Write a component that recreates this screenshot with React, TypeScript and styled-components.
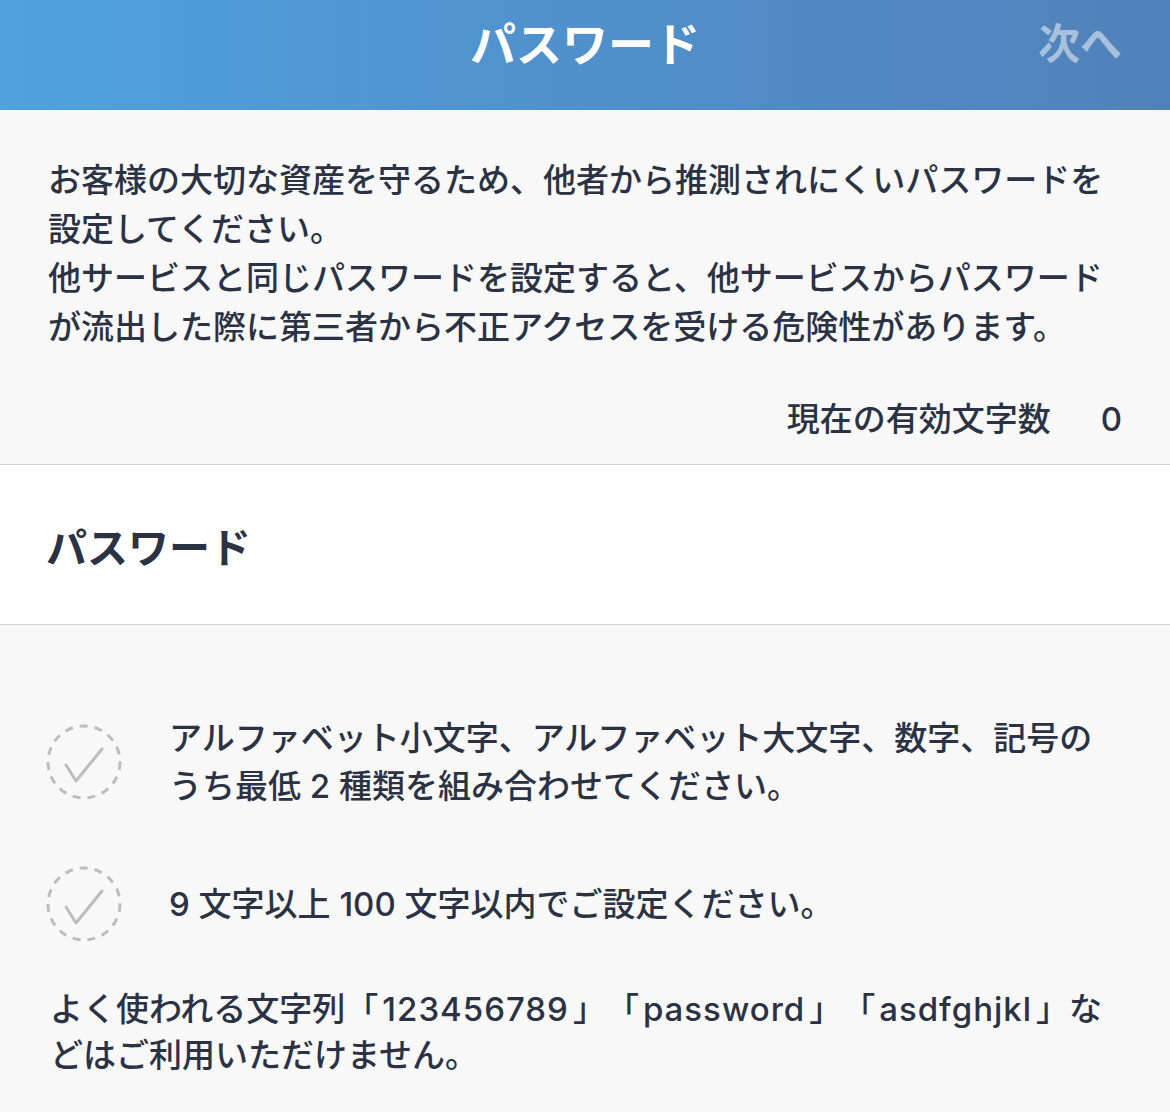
import React from 'react';
import styled, { createGlobalStyle } from 'styled-components';

const GlobalStyle = createGlobalStyle`
  html, body {
    margin: 0;
    padding: 0;
    background: #f8f8f8;
  }
  body {
    font-family: Inter, "Noto Sans CJK JP", "Noto Sans", sans-serif;
    color: #2b3243;
    text-spacing-trim: space-all;
  }
`;

const rules = [
  {
    id: 'kinds',
    text: 'アルファベット小文字、アルファベット大文字、数字、記号のうち最低 2 種類を組み合わせてください。',
  },
  { id: 'length', text: '9 文字以上 100 文字以内でご設定ください。' },
];

const weakWords = ['123456789', 'password', 'asdfghjkl'];

function CheckCircle() {
  return (
    <svg width="76" height="76" viewBox="0 0 76 76">
      <circle
        cx="38"
        cy="38"
        r="36"
        fill="none"
        stroke="#bdbdbd"
        strokeWidth="3"
        strokeDasharray="8 7"
      />
      <polyline
        points="20,41 30,57 56,25"
        fill="none"
        stroke="#bdbdbd"
        strokeWidth="3"
        strokeLinecap="round"
        strokeLinejoin="round"
      />
    </svg>
  );
}

export default function App() {
  return (
    <>
      <GlobalStyle />
      <Page>
        <Header>
          <HeaderSide />
          <HeaderTitle>パスワード</HeaderTitle>
          <HeaderSide>
            <NextButton>次へ</NextButton>
          </HeaderSide>
        </Header>

        <Intro>
          <IntroText>
            お客様の大切な資産を守るため、他者から推測されにくいパスワードを設定してください。
            <br />
            他サービスと同じパスワードを設定すると、他サービスからパスワードが流出した際に第三者から不正アクセスを受ける危険性があります。
          </IntroText>
          <Counter>
            <span>現在の有効文字数</span>
            <span>0</span>
          </Counter>
        </Intro>

        <FieldSection>
          <FieldTitle>パスワード</FieldTitle>
        </FieldSection>

        <RulesSection>
          <RuleList>
            {rules.map((r) => (
              <RuleRow key={r.id}>
                <CheckCircle />
                <RuleText>{r.text}</RuleText>
              </RuleRow>
            ))}
          </RuleList>
          <Note>
            よく使われる文字列
            {weakWords.map((w) => (
              <React.Fragment key={w}>
                「<Latin>{w}</Latin>」
              </React.Fragment>
            ))}
            な
            <br />
            どはご利用いただけません。
          </Note>
        </RulesSection>
      </Page>
    </>
  );
}

const Page = styled.div`
  width: 1170px;
  min-height: 1112px;
  background: #f8f8f8;
`;

const Header = styled.header`
  height: 110px;
  box-sizing: border-box;
  padding: 0 48px 22px;
  display: grid;
  grid-template-columns: 1fr auto 1fr;
  align-items: center;
  background: linear-gradient(90deg, #4fa2de 0%, #5090cc 50%, #5181b9 100%);
`;

const HeaderSide = styled.div`
  display: flex;
  justify-content: flex-end;
`;

const HeaderTitle = styled.h1`
  margin: 0;
  font-size: 46px;
  font-weight: 700;
  color: #ffffff;
  line-height: 88px;
`;

const NextButton = styled.span`
  font-size: 42px;
  font-weight: 700;
  color: rgba(255, 255, 255, 0.5);
  line-height: 88px;
`;

const Intro = styled.section`
  padding: 46px 48px 20px;
  border-bottom: 1px solid #d2d2d2;
`;

const IntroText = styled.p`
  margin: 0;
  font-size: 33px;
  line-height: 49px;
  font-weight: 500;
`;

const Counter = styled.div`
  margin-top: 43px;
  display: flex;
  justify-content: flex-end;
  gap: 50px;
  font-size: 33px;
  line-height: 49px;
  font-weight: 500;
`;

const FieldSection = styled.section`
  height: 160px;
  box-sizing: border-box;
  padding: 0 46px;
  display: flex;
  align-items: center;
  background: #ffffff;
  border-bottom: 1px solid #d2d2d2;
`;

const FieldTitle = styled.h2`
  margin: 0;
  font-size: 41px;
  font-weight: 700;
`;

const RulesSection = styled.section`
  padding: 89px 48px 40px 46px;
`;

const RuleList = styled.div`
  display: flex;
  flex-direction: column;
  gap: 56px;
`;

const RuleRow = styled.div`
  display: flex;
  align-items: center;
  gap: 47px;
`;

const RuleText = styled.p`
  margin: 0;
  flex: 1;
  font-size: 33px;
  line-height: 48px;
  font-weight: 500;
`;

const Note = styled.p`
  margin: 44px 0 0 4px;
  font-size: 33px;
  line-height: 46px;
  font-weight: 500;
`;

const Latin = styled.span`
  letter-spacing: 1px;
  padding: 0 4px;
`;
